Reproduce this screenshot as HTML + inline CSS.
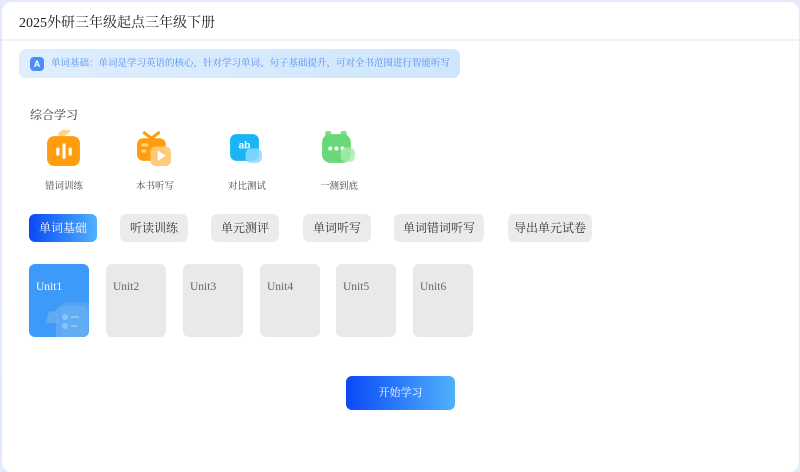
<!DOCTYPE html><html><head><meta charset="utf-8"><style>
*{margin:0;padding:0;box-sizing:border-box}
body{width:800px;height:455px;background:linear-gradient(180deg,#e4eafb,#dce9fb);overflow:hidden;position:relative;font-family:"Liberation Serif","Noto Serif CJK SC",serif;color:#333}
.card{position:absolute;left:2px;top:2px;width:797px;height:470px;background:#fff;border-radius:10px}
.hd{position:absolute;left:0;top:0;width:100%;height:39px;border-bottom:2px solid #eef3fb;font-size:14px;color:#222;padding:10px 0 0 17px}
.ban{position:absolute;left:17px;top:47px;width:441px;height:29px;border-radius:7px;background:linear-gradient(90deg,#deeefe,#cfe6fd);font-size:9.5px;color:#5a8ee8;padding:6px 0 0 32px;white-space:nowrap}
.ban i{position:absolute;left:11px;top:8px;width:14px;height:14px;border-radius:4px;background:#4b8df7;color:#fff;font-style:normal;font-family:"Liberation Sans",sans-serif;font-weight:bold;font-size:9px;text-align:center;line-height:14px}
.t{position:absolute;font-size:12px}
.ic{position:absolute;top:128px;width:37px;height:37px}
.lb{position:absolute;top:176px;font-size:9.5px;color:#444;width:80px;text-align:center}
.tab{position:absolute;top:212px;height:28px;border-radius:6px;background:#ebebeb;font-size:12px;color:#333;text-align:center;line-height:28px}
.tab.a{background:linear-gradient(90deg,#0b48f6,#4fb2fd);color:#fff}
.u{position:absolute;top:262px;width:60px;height:73px;border-radius:6px;background:#e9e9e9;color:#666;font-size:11.5px;padding:17px 0 0 7px;overflow:hidden}
.u.a{background:#3c9bf8;color:#fff}
.go{position:absolute;left:344px;top:374px;width:109px;height:34px;border-radius:6px;background:linear-gradient(90deg,#0b48f6,#4fb2fd);color:#fff;font-size:11px;text-align:center;line-height:34px}
</style></head><body><div class="card">
<div class="hd">2025外研三年级起点三年级下册</div>
<div class="ban"><i>A</i>单词基础：单词是学习英语的核心，针对学习单词、句子基础提升，可对全书范围进行智能听写</div>
<div class="t" style="left:28px;top:104px">综合学习</div>
<svg class="ic" style="left:43px" viewBox="0 0 36 36"><rect x="13" y="0" width="13" height="6" rx="3" transform="rotate(-35 18 4)" fill="#ffd48a"/><rect x="2" y="6" width="32" height="29" rx="7" fill="#ff9c10"/><rect x="11" y="17" width="3" height="8" rx="1.5" fill="#fff"/><rect x="17" y="13" width="3" height="15" rx="1.5" fill="#fff"/><rect x="23" y="17" width="3" height="8" rx="1.5" fill="#fff"/></svg>
<svg class="ic" style="left:133px" viewBox="0 0 36 36"><path d="M8 2l8 6l8-6" stroke="#ff9c10" stroke-width="3" fill="none"/><rect x="2" y="8" width="28" height="22" rx="6" fill="#ff9c10"/><rect x="6" y="13" width="7" height="3" rx="1.5" fill="#ffd48a"/><rect x="6" y="19" width="5" height="3" rx="1.5" fill="#ffd48a"/><rect x="15" y="16" width="20" height="19" rx="5" fill="#ffc978" opacity=".95"/><path d="M22 20l8 5l-8 5z" fill="#fff"/></svg>
<svg class="ic" style="left:225px" viewBox="0 0 36 36"><rect x="3" y="4" width="28" height="26" rx="6" fill="#1bb5f5"/><text x="17" y="18" font-family="Liberation Sans" font-weight="bold" font-size="10" fill="#fff" text-anchor="middle">ab</text><rect x="18" y="18" width="16" height="14" rx="5" fill="#8fd8fb" opacity=".85"/></svg>
<svg class="ic" style="left:318px" viewBox="0 0 36 36"><rect x="5" y="1" width="6" height="6" rx="2" fill="#7fe08d"/><rect x="20" y="1" width="6" height="6" rx="2" fill="#7fe08d"/><rect x="2" y="4" width="28" height="28" rx="8" fill="#6ad77a"/><circle cx="10" cy="18" r="2" fill="#fff"/><circle cx="16" cy="18" r="2" fill="#fff"/><circle cx="22" cy="18" r="2" fill="#fff"/><rect x="20" y="17" width="14" height="14" rx="5" fill="#a7ecb0" opacity=".8"/></svg>
<div class="lb" style="left:22px">错词训练</div>
<div class="lb" style="left:113px">本书听写</div>
<div class="lb" style="left:205px">对比测试</div>
<div class="lb" style="left:297px">一测到底</div>
<div class="tab a" style="left:27px;width:68px">单词基础</div>
<div class="tab" style="left:118px;width:68px">听读训练</div>
<div class="tab" style="left:209px;width:68px">单元测评</div>
<div class="tab" style="left:301px;width:68px">单词听写</div>
<div class="tab" style="left:392px;width:90px">单词错词听写</div>
<div class="tab" style="left:506px;width:84px">导出单元试卷</div>
<div class="u a" style="left:27px">Unit1<svg style="position:absolute;left:8px;top:28px" width="52" height="45" viewBox="0 0 52 45"><path d="M10 28q0-9 6-9t6 9l2 3h-16z" fill="#6fb0f0" opacity=".7"/><rect x="24" y="10" width="32" height="40" rx="5" fill="#5aa6f5" opacity=".7"/><rect x="19" y="14" width="32" height="40" rx="5" fill="#6aaef5" opacity=".7"/><circle cx="28" cy="25" r="3" fill="#8cc4f8"/><rect x="34" y="24" width="8" height="2" fill="#8cc4f8"/><circle cx="28" cy="34" r="3" fill="#8cc4f8"/><rect x="34" y="33" width="6" height="2" fill="#8cc4f8"/></svg></div>
<div class="u" style="left:104px">Unit2</div>
<div class="u" style="left:181px">Unit3</div>
<div class="u" style="left:258px">Unit4</div>
<div class="u" style="left:334px">Unit5</div>
<div class="u" style="left:411px">Unit6</div>
<div class="go">开始学习</div>
</div></body></html>
